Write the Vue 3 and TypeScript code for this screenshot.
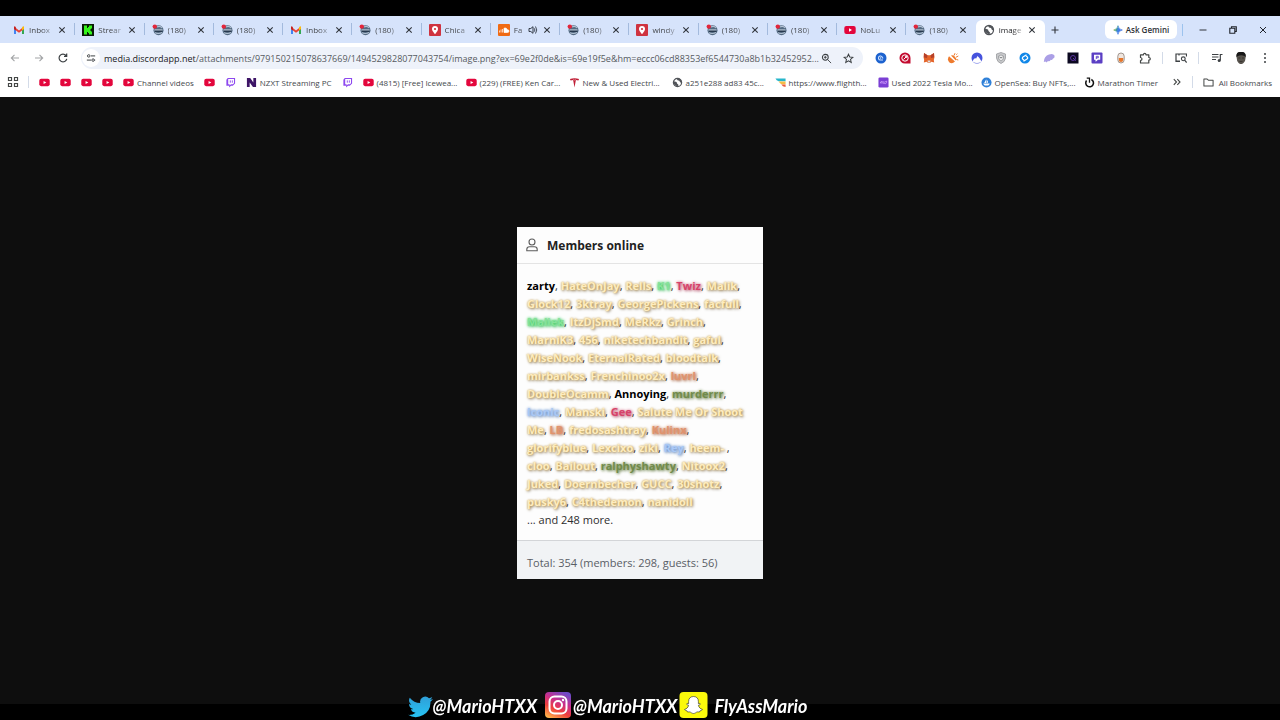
<script setup lang="ts">
interface Tab { icon: string; title: string; audio?: boolean; active?: boolean }
interface Bookmark { icon: string; title?: string; label: string; clip?: boolean }
interface Member { name: string; tone?: string; end?: string }

const tabs: Tab[] = [
  { icon: 'gmail', title: 'Inbox' },
  { icon: 'kick', title: 'Strear' },
  { icon: 'forum', title: '(180)' },
  { icon: 'forum', title: '(180)' },
  { icon: 'gmail', title: 'Inbox' },
  { icon: 'forum', title: '(180)' },
  { icon: 'pin', title: 'Chica' },
  { icon: 'cloud', title: 'Fa', audio: true },
  { icon: 'forum', title: '(180)' },
  { icon: 'pin', title: 'windy' },
  { icon: 'forum', title: '(180)' },
  { icon: 'forum', title: '(180)' },
  { icon: 'youtube', title: 'NoLu' },
  { icon: 'forum', title: '(180)' },
  { icon: 'globe', title: 'image', active: true },
]

const bookmarks: Bookmark[] = [
  { icon: 'youtube', label: 'YouTube' },
  { icon: 'youtube', label: 'YouTube' },
  { icon: 'youtube', label: 'YouTube' },
  { icon: 'youtube', label: 'YouTube' },
  { icon: 'youtube', title: 'Channel videos', label: 'Channel videos' },
  { icon: 'youtube', label: 'YouTube' },
  { icon: 'twitch', label: 'Twitch' },
  { icon: 'nzxt', title: 'NZXT Streaming PC', label: 'NZXT' },
  { icon: 'twitch', label: 'Twitch' },
  { icon: 'youtube', title: '(4815) [Free] Icewea...', label: 'YouTube', clip: true },
  { icon: 'youtube', title: '(229) (FREE) Ken Car...', label: 'YouTube', clip: true },
  { icon: 'tesla', title: 'New & Used Electri...', label: 'Tesla', clip: true },
  { icon: 'globe', title: 'a251e288 ad83 45c...', label: 'Page', clip: true },
  { icon: 'flight', title: 'https://www.flighth...', label: 'Flight', clip: true },
  { icon: 'violet', title: 'Used 2022 Tesla Mo...', label: 'Tesla', clip: true },
  { icon: 'opensea', title: 'OpenSea: Buy NFTs,...', label: 'OpenSea', clip: true },
  { icon: 'timer', title: 'Marathon Timer', label: 'Timer' },
]

const extensions = ['bluedot', 'redswirl', 'fox', 'plug', 'nord', 'shield', 'shazam', 'wing', 'darkbox', 'pbox', 'capsule', 'puzzle']

const m = (name: string, tone = 'gold', end = ','): Member => ({ name, tone, end })
const lines: Member[][] = [
  [m('zarty', 'black'), m('HateOnJay'), m('Rells'), m('K1', 'green'), m('Twiz', 'red'), m('Malik')],
  [m('Glock12'), m('3ktray'), m('GeorgePickens'), m('facfull')],
  [m('Maliek', 'green'), m('ItzDjSmd'), m('MeRkz'), m('Grinch')],
  [m('MarniK3'), m('456'), m('niketechbandit'), m('gaful')],
  [m('WiseNook'), m('EternalRated'), m('bloodtalk')],
  [m('mirbankss'), m('Frenchinoo2x'), m('luvrl', 'orange')],
  [m('DoubleOcamm'), m('Annoying', 'black'), m('murderrr', 'olive')],
  [m('Iconic', 'blue'), m('Manski'), m('Gee', 'red'), m('Salute Me Or Shoot', 'gold', '')],
  [m('Me'), m('LB', 'orange'), m('fredosashtray'), m('Kulinx', 'orange')],
  [m('glorifyblue'), m('Lexcixo'), m('ziki'), m('Rey', 'blue'), m('heem-', 'gold', ' ,')],
  [m('cloo'), m('Bailout'), m('ralphyshawty', 'olive'), m('Nitoox2')],
  [m('Juked'), m('Doernbecher'), m('GUCC'), m('30shotz')],
  [m('pusky6'), m('C4thedemon'), m('nanidoll', 'gold', '')],
]
</script>

<template>
  <svg class="defs" width="0" height="0" aria-hidden="true">
    <defs>
      <linearGradient id="bird" x1="0" y1="0" x2="0" y2="1"><stop offset="0" stop-color="#2f9fd8" /><stop offset="1" stop-color="#27c3f3" /></linearGradient>
      <linearGradient id="insta" x1="0.2" y1="1" x2="0.7" y2="0"><stop offset="0" stop-color="#fdb04a" /><stop offset="0.35" stop-color="#ef3f3c" /><stop offset="0.65" stop-color="#c92f8d" /><stop offset="1" stop-color="#6f4bc8" /></linearGradient>
      <linearGradient id="spark" x1="0" y1="0" x2="1" y2="0.3"><stop offset="0" stop-color="#e9b52c" /><stop offset="0.3" stop-color="#3fa26a" /><stop offset="0.6" stop-color="#3f7fe8" /><stop offset="1" stop-color="#3a6fe0" /></linearGradient>
      <symbol id="i-gmail" viewBox="0 0 12 12"><path d="M1 3v7h2V5z" fill="#4285f4" /><path d="M11 3v7H9V5z" fill="#34a853" /><path d="M1 2.5L6 6.4l5-3.9v2.4L6 8.8 1 4.900z" fill="#ea4335" /><path d="M1 2.500h1.200L3 3.500v2.900L1 5z" fill="#c5221f" /><path d="M11 2.500H9.800L9 3.500v2.900L11 5z" fill="#fbbc04" /></symbol>
      <symbol id="i-kick" viewBox="0 0 12 12"><rect width="12" height="12" fill="#0a1a08" /><path d="M2 1.500h3v2.500h1v-1h1V1.500h3v3H9v1H8v1h1v1h1v3H7V9H6V8H5v2.500H2z" fill="#35f51c" /></symbol>
      <symbol id="i-forum" viewBox="0 0 12 12"><circle cx="6.500" cy="6.300" r="5" fill="#536a82" /><path d="M5 3q3-1.500 5 1M3 8.800q3.500 1.500 7-.300" stroke="#b4c2d4" stroke-width="1.200" fill="none" /><path d="M2.500 6h8" stroke="#dbe3ee" stroke-width="1" /><path d="M3 7.300h7.500" stroke="#25374c" stroke-width="1.300" /><circle cx="2.800" cy="2.600" r="2.200" fill="#e3263c" /></symbol>
      <symbol id="i-pin" viewBox="0 0 12 12"><rect width="12" height="12" rx="1" fill="#cf3340" /><path d="M6 2a3 3 0 0 0-3 3c0 2 3 5.200 3 5.200S9 7 9 5a3 3 0 0 0-3-3z" fill="#fff" /><circle cx="6" cy="5" r="1.100" fill="#cf3340" /></symbol>
      <symbol id="i-cloud" viewBox="0 0 12 12"><rect width="12" height="12" rx="1" fill="#f06a13" /><path d="M6 8.500V4.200q2.500-1 3.300 1.500 1.700 0 1.700 1.400T9.600 8.500zM1.500 6.500v2M3 5.500v3M4.500 5v3.500" fill="#fff" stroke="#fff" stroke-width=".7" /></symbol>
      <symbol id="i-youtube" viewBox="0 0 12 12"><rect x=".3" y="2" width="11.400" height="8" rx="2" fill="#e3063c" /><path d="M5 4.300v3.400L8 6z" fill="#fff" /></symbol>
      <symbol id="i-globe" viewBox="0 0 12 12"><circle cx="6" cy="6" r="4.500" fill="#fff" stroke="#515459" stroke-width="1.300" /><path d="M2 4.500l3 1 .500 1.500L7 8.500l-.5 2-3-1.500L1.500 7zM5 1.500l1 2 2 .5 1 2 1.500 0L10 3 7.500 1.500z" fill="#515459" /></symbol>
      <symbol id="i-twitch" viewBox="0 0 12 12"><path d="M3 1h8v6L8.500 9.500h-2L4.500 11.500v-2H1.500V3z" fill="#8d48ef" /><path d="M3.500 2.200h6.300v4.500L8.500 8H6.500L5 9.300V8H3.500z" fill="#fff" /><path d="M5.800 3.700v2.500M8 3.700v2.500" stroke="#8d48ef" /></symbol>
      <symbol id="i-nzxt" viewBox="0 0 12 12"><path d="M1 1h3.600l3.400 5V1h3v10H7.600L4 6v5H1z" fill="#3d1466" /></symbol>
      <symbol id="i-tesla" viewBox="0 0 12 12"><path d="M1 2.200Q6 .5 11 2.200l-.8 1.600-2.700-.6L6 11.500 4.500 3.200l-2.700.6z" fill="#c01f36" /><path d="M4.900 2.500L6 3.600l1.100-1.100" stroke="#fff" stroke-width=".6" fill="none" /></symbol>
      <symbol id="i-flight" viewBox="0 0 12 12"><path d="M.5 1.500h11v3H4Q1.500 4 .5 1.500z" fill="#27b6cb" /><path d="M4 5h7.500v2.800H7Q5 7 4 5z" fill="#f4bd45" /><path d="M7 8.300h4.500V11Q8 11 7 8.300z" fill="#ec5b3c" /></symbol>
      <symbol id="i-violet" viewBox="0 0 12 12"><rect x=".5" y=".5" width="11" height="11" rx="1.500" fill="#7b3fd4" /><path d="M2.500 6.500Q3 4 5 5.200t4.500-.7Q9.500 8 7 7T2.500 6.500z" stroke="#d9a8ff" stroke-width=".8" fill="none" /></symbol>
      <symbol id="i-opensea" viewBox="0 0 12 12"><circle cx="6" cy="6" r="5.500" fill="#2f80d8" /><path d="M5.700 2.500v4H3.500zM6.300 3q2 1.500 1 3.500h-1zM2.500 7.200h7Q9 9.300 7.500 9.300h-3Q3 9.300 2.500 7.200z" fill="#fff" /></symbol>
      <symbol id="i-timer" viewBox="0 0 12 12"><path d="M8 2.700a4.200 4.200 0 1 1-5.200 1.200" fill="none" stroke="#111" stroke-width="1.700" /><path d="M3 1.300h3v5" stroke="#111" stroke-width="1.400" fill="none" /></symbol>
      <symbol id="i-bluedot" viewBox="0 0 12 12"><circle cx="6" cy="6" r="5.500" fill="#1c62cf" /><path d="M8 8H5.500a2 2 0 1 1 1.800-2.800L8 6.500" fill="none" stroke="#cfe2ff" stroke-width="1.100" /><circle cx="5.600" cy="6" r=".8" fill="#cfe2ff" /></symbol>
      <symbol id="i-redswirl" viewBox="0 0 12 12"><path d="M6 .5A5.500 5.500 0 1 0 6 11.500h5.500V6A5.500 5.500 0 0 0 6 .500z" fill="#c30c30" /><circle cx="6" cy="6" r="3.200" stroke="#fff" fill="none" /><path d="M4.500 7.500L7.500 4.500M6 4.300h1.700V6" stroke="#fff" stroke-width="1" fill="none" /></symbol>
      <symbol id="i-fox" viewBox="0 0 12 12"><path d="M1 1l3.500 2.200h3L11 1l.5 4-.7 3 .4 2.500-3-.7L7 11H5L3.800 9.800l-3 .7L1.200 8 .5 5z" fill="#e4642a" /><path d="M1 1l3.500 2.200L4 6 1 5.500zM11 1L7.500 3.200 8 6l3-.5z" fill="#b5402a" /><path d="M4.500 8.500h3l-.5 2H5z" fill="#ddd" /></symbol>
      <symbol id="i-plug" viewBox="0 0 12 12"><path d="M2 4.200L8 9.500Q5 12.500 2.200 10.200-.2 7.500 2 4.200z" fill="#ee7a2d" /><path d="M4 3.500Q6 2.800 8 4.800T8.800 8.500z" fill="#ee7a2d" /><path d="M7 3.500L8 1.200M9 5.200L11.300 4M9.300 7.500l2 .5M9.300 2.700l1-1" stroke="#ee7a2d" stroke-width="1" /></symbol>
      <symbol id="i-nord" viewBox="0 0 12 12"><circle cx="6" cy="6" r="5.500" fill="#4653dd" /><path d="M1.500 9.500Q2.500 6.500 4.200 6L5 6.700 6.500 4Q9 6 10.500 9.500 6 12.500 1.500 9.500z" fill="#fff" /></symbol>
      <symbol id="i-shield" viewBox="0 0 12 12"><path d="M6 .5l4.500 1.500v4Q10 10 6 11.500 2 10 1.500 6V2z" fill="#c8c9cb" stroke="#999b9e" stroke-width=".8" /><path d="M6 3l2.500 1v2Q8 8 6 9 4 8 3.500 6V4z" fill="#eee" stroke="#8d9094" stroke-width=".7" /><path d="M4.500 5l1.500 1 1.500-1" stroke="#77797c" fill="none" /></symbol>
      <symbol id="i-shazam" viewBox="0 0 12 12"><circle cx="6" cy="6" r="5.500" fill="#1187e8" /><path d="M7.500 2.800L4 4.900q-1.500 1.500.2 2.600l.8.5M4.500 9.200L8 7.100q1.500-1.500-.2-2.600L7 4" fill="none" stroke="#fff" stroke-width="1.200" /></symbol>
      <symbol id="i-wing" viewBox="0 0 12 12"><path d="M.8 10Q1 4 6 2.500q4-1.500 5.500 1 .3 3-1.500 3-.5 2-2.300 1.300Q6.700 10 5 9L3.500 10.500l-1-1z" fill="#ab9fe6" /></symbol>
      <symbol id="i-darkbox" viewBox="0 0 12 12"><rect x=".5" y=".5" width="11" height="11" fill="#0b0820" /><circle cx="6" cy="6" r="2.500" fill="none" stroke="#5a34a0" stroke-width="1" /><path d="M6 6l2.800 2.800" stroke="#5a34a0" /></symbol>
      <symbol id="i-pbox" viewBox="0 0 12 12"><rect x=".5" y=".5" width="11" height="11" rx="1" fill="#5b3fc4" /><path d="M4.500 9.500v-1.800H3V2.700h6.200v5H7L5 9.500z" fill="#fff" /><path d="M5.300 7V4.300h2v1.500h-2" fill="none" stroke="#5b3fc4" stroke-width=".9" /></symbol>
      <symbol id="i-capsule" viewBox="0 0 12 12"><rect x="2.800" y="1" width="6.400" height="10" rx="3.200" fill="#efe6df" stroke="#978b83" stroke-width=".9" /><path d="M3.800 6h4.400v1.800a2.200 2.200 0 0 1-4.400 0z" fill="#e6762b" /></symbol>
      <symbol id="i-puzzle" viewBox="0 0 12 12"><path d="M1.500 2.800h3Q4.500 1.300 5.700 1.300T7 2.800h2.800v2.700q1.500 0 1.500 1.300T9.800 8v3H1.500V8.500Q3 8.300 3 7T1.500 5.500z" fill="none" stroke="#444746" stroke-width="1.200" stroke-linejoin="round" /></symbol>
    </defs>
  </svg>

  <div class="screen">
    <header class="browser">
      <nav class="tabs" aria-label="Tabs">
        <div v-for="(t, i) in tabs" :key="i" class="tab" :class="{ active: t.active, last: i === tabs.length - 2 }">
          <svg class="fav"><use :href="'#i-' + t.icon" /></svg>
          <span class="tab-title" :class="{ short: t.audio }">{{ t.title }}</span>
          <svg v-if="t.audio" class="audio" viewBox="0 0 10 10"><path d="M1 3.500h1.800L5 1.700v6.600L2.800 6.500H1z" fill="none" stroke="#333b47" /><path d="M6.300 3.300q1.200 1.700 0 3.400M7.500 1.500q2.500 3.500 0 7" fill="none" stroke="#333b47" stroke-width=".9" /></svg>
          <button class="close" aria-label="Close tab"><svg viewBox="0 0 8 8"><path d="M1.300 1.300l5.400 5.400M6.700 1.300L1.300 6.700" stroke="#30343b" stroke-width="1.100" /></svg></button>
        </div>
        <div class="strip-end">
          <button class="plus" aria-label="New tab"><svg viewBox="0 0 10 10"><path d="M5 1.500v7M1.500 5h7" stroke="#30343b" stroke-width="1.100" /></svg></button>
          <button class="gemini"><svg viewBox="0 0 12 12"><path d="M6 .8Q6.600 5.400 11.200 6 6.600 6.600 6 11.200 5.400 6.600.8 6 5.400 5.400 6 .8z" fill="url(#spark)" stroke="url(#spark)" stroke-width=".8" /></svg>Ask Gemini</button>
          <i class="sep blue"></i>
          <button class="win" aria-label="Minimize"><svg viewBox="0 0 10 10"><path d="M1.500 5h7" stroke="#30343b" /></svg></button>
          <button class="win" aria-label="Restore"><svg viewBox="0 0 10 10"><path d="M1.800 3.300h5v5h-5zM3.500 3V1.700h4.800v4.800H7" fill="none" stroke="#20242b" stroke-width="1.100" /></svg></button>
          <button class="win" aria-label="Close"><svg viewBox="0 0 10 10"><path d="M2 2l6 6M8 2L2 8" stroke="#20242b" /></svg></button>
        </div>
      </nav>

      <div class="toolbar">
        <button class="tool" aria-label="Back"><svg viewBox="0 0 12 12"><path d="M10 6H2.500M5.500 2.800L2.300 6l3.200 3.200" fill="none" stroke="#a2a4a6" stroke-width="1.100" /></svg></button>
        <button class="tool" aria-label="Forward"><svg viewBox="0 0 12 12"><path d="M2 6h7.500M6.500 2.800L9.700 6 6.500 9.200" fill="none" stroke="#a2a4a6" stroke-width="1.100" /></svg></button>
        <button class="tool" aria-label="Reload"><svg viewBox="0 0 12 12"><path d="M9 3.500A3.900 3.900 0 1 0 9.800 6.800M9.700 1.500v2.800H7" fill="none" stroke="#3c4043" stroke-width="1.200" /></svg></button>
        <div class="omnibox">
          <button class="site" aria-label="Site information"><svg viewBox="0 0 12 12"><path d="M1.500 3.500h2M6 3.500h5M1 8.500h5M9.800 8.500h1.200" stroke="#3c4043" stroke-width="1.200" /><circle cx="3.300" cy="3.500" r="1.500" fill="#fff" stroke="#3c4043" stroke-width="1.100" /><circle cx="8.500" cy="8.500" r="1.500" fill="#fff" stroke="#3c4043" stroke-width="1.100" /></svg></button>
          <a class="url" href="#"><b>media.discordapp.net</b>/attachments/979150215078637669/1494529828077043754/image.png?ex=69e2f0de&amp;is=69e19f5e&amp;hm=eccc06cd88353ef6544730a8b1b32452952...</a>
          <button class="in" aria-label="Zoom"><svg viewBox="0 0 12 12"><circle cx="4.700" cy="4.700" r="3.200" fill="none" stroke="#3c4043" stroke-width="1.100" /><path d="M7 7l4 4M4.700 3.200v3M3.200 4.700h3" stroke="#3c4043" /></svg></button>
          <button class="in" aria-label="Bookmark this tab"><svg viewBox="0 0 12 12"><path d="M6 1.300l1.400 3.100 3.400.3-2.600 2.200.8 3.400-3-1.800-3 1.800.8-3.400L1.200 4.700l3.400-.3z" fill="none" stroke="#3c4043" stroke-width="1.100" /></svg></button>
        </div>
        <button v-for="e in extensions" :key="e" class="tool" :aria-label="e"><svg><use :href="'#i-' + e" /></svg></button>
        <i class="sep mid"></i>
        <button class="tool" aria-label="Search tabs"><svg viewBox="0 0 12 12"><path d="M5 9.500H1V2h10.500v2.500M4 2v1.500" fill="none" stroke="#3c4043" stroke-width="1.200" /><path d="M1 8.500h4V10H1z" fill="#3c4043" /><circle cx="8.300" cy="6.800" r="1.900" fill="none" stroke="#3c4043" stroke-width="1.100" /><path d="M9.600 8.200l2 2.300" stroke="#3c4043" stroke-width="1.200" /></svg></button>
        <i class="sep mid"></i>
        <button class="tool" aria-label="Media"><svg viewBox="0 0 12 12"><path d="M1 2.500h6.500M1 5h6.500M1 7.500h4M9.300 8.500v-6h2.200" stroke="#3c4043" stroke-width="1.200" fill="none" /><circle cx="8.200" cy="8.500" r="1.500" fill="#3c4043" /></svg></button>
        <button class="tool" aria-label="Profile"><svg viewBox="0 0 12 12"><path d="M1.500 5Q1-.2 6-.2T10.700 5L10 9Q8 12.200 6 12.200T2.200 9z" fill="#57534d" /><path d="M1.500 5Q.8-.2 6-.2T10.700 5L9.500 4Q6 2.500 3 4z" fill="#181818" /><path d="M3.300 6h2M7 6h2M4.500 9.500h3" stroke="#3a3631" /></svg></button>
        <button class="tool" aria-label="Menu"><svg viewBox="0 0 12 12"><g fill="#3c4043"><circle cx="6" cy="2" r="1" /><circle cx="6" cy="6" r="1" /><circle cx="6" cy="10" r="1" /></g></svg></button>
      </div>

      <nav class="bookmarks" aria-label="Bookmarks">
        <button class="apps" aria-label="Apps"><svg viewBox="0 0 12 12"><path d="M1.500 1.500h3v3h-3zM7.500 1.500h3v3h-3zM1.500 7.500h3v3h-3zM7.500 7.500h3v3h-3z" fill="none" stroke="#444746" stroke-width="1.200" /></svg></button>
        <i class="sep"></i>
        <div class="marks">
          <a v-for="(b, i) in bookmarks" :key="i" href="#" class="mark" :aria-label="b.label">
            <svg><use :href="'#i-' + b.icon" /></svg><span v-if="b.title" :class="{ clip: b.clip }">{{ b.title }}</span>
          </a>
        </div>
        <button class="more" aria-label="More bookmarks"><svg viewBox="0 0 10 10"><path d="M1.800 2.200L4.500 5 1.800 7.800M5.300 2.200L8 5 5.300 7.800" fill="none" stroke="#444746" stroke-width="1.100" /></svg></button>
        <i class="sep"></i>
        <a class="mark all" href="#"><svg viewBox="0 0 12 12"><path d="M1 2.200h3.500l1.300 1.300H11v6.300H1z" fill="none" stroke="#444746" stroke-width="1.100" stroke-linejoin="round" /></svg><span>All Bookmarks</span></a>
      </nav>
    </header>

    <main class="page">
      <section class="card">
        <h2><svg viewBox="0 0 12 14"><circle cx="6" cy="4" r="3" fill="none" stroke="#5c5c5c" stroke-width="1.100" /><path d="M.8 12.800V11.500Q.8 8.800 3.500 8.800h5q2.700 0 2.700 2.700v1.300z" fill="none" stroke="#5c5c5c" stroke-width="1.100" /></svg>Members online</h2>
        <div class="members">
          <p v-for="(line, i) in lines" :key="i"><template v-for="(p, j) in line" :key="j"><a href="#" :class="p.tone">{{ p.name }}</a>{{ p.end + ' ' }}</template></p>
          <p class="rest">... and 248 more.</p>
        </div>
        <footer>Total: 354 (members: 298, guests: 56)</footer>
      </section>
    </main>

    <div class="socials">
      <svg class="bird" viewBox="0 0 24 20"><path d="M24 2.400a10 10 0 0 1-2.800.8A5 5 0 0 0 23.300.5a10 10 0 0 1-3.100 1.200 4.900 4.900 0 0 0-8.400 4.500A14 14 0 0 1 1.700 1a4.900 4.900 0 0 0 1.500 6.600A5 5 0 0 1 1 7a4.900 4.900 0 0 0 3.900 4.900 5 5 0 0 1-2.200.1 4.900 4.900 0 0 0 4.600 3.400A9.900 9.900 0 0 1 0 17.500 14 14 0 0 0 21.500 5 10 10 0 0 0 24 2.400z" fill="url(#bird)" /></svg>
      <span class="handle">@MarioHTXX</span>
      <svg class="insta" viewBox="0 0 26 26"><rect width="26" height="26" rx="4" fill="url(#insta)" /><rect x="4.500" y="4.500" width="17" height="17" rx="5" fill="none" stroke="#fff" stroke-width="2" /><circle cx="13" cy="13" r="4" fill="none" stroke="#fff" stroke-width="2" /><circle cx="18" cy="8" r="1.200" fill="#fff" /></svg>
      <span class="handle">@MarioHTXX</span>
      <svg class="snap" viewBox="0 0 28 26"><rect width="28" height="26" rx="4" fill="#fbf90b" /><path d="M14 4.500c3.300 0 5 2.200 4.900 5v2.200l1.500-.3c.9.300.7 1.200-1.500 2 .5 2 2 3.500 4 4-.1 1-1.500 1.100-2.400 1.400l-.5 1.200-2.300-.1c-1.200.3-2 1.600-3.700 1.600s-2.500-1.300-3.700-1.600l-2.300.1-.5-1.200c-.9-.3-2.300-.4-2.400-1.400 2-.5 3.500-2 4-4-2.200-.8-2.400-1.700-1.500-2l1.500.3V9.500c-.1-2.800 1.600-5 4.900-5z" fill="#fff" stroke="#222" stroke-width=".6" /></svg>
      <span class="handle">FlyAssMario</span>
    </div>
  </div>
</template>

<style>
html, body { margin: 0; background: #000; }
</style>

<style scoped>
* { box-sizing: border-box; }
.defs { position: absolute; }
.screen { min-height: 100vh; display: flex; flex-direction: column; padding: 16px 0; background: #000; font-family: "Open Sans", "Noto Sans", sans-serif; color: #44474b; overflow: hidden; }
button { border: 0; padding: 0; background: none; font: inherit; color: inherit; display: flex; align-items: center; justify-content: center; }
a { color: inherit; text-decoration: none; }
svg { display: block; flex: none; }
.browser { background: #fff; }
.tabs { display: flex; height: 27px; padding-left: 6px; background: #d6e3fb; }
.tab { flex: 1 1 0; min-width: 0; display: flex; align-items: center; padding: 0 8px 0 7px; position: relative; font-size: 8px; }
.tab::after { content: ""; position: absolute; right: 0; top: 7px; width: 1px; height: 12px; background: #a3badd; }
.tab.last::after, .tab.active::after { display: none; }
.fav { width: 12px; height: 12px; }
.tab-title { flex: 1; min-width: 0; margin-left: 4px; white-space: nowrap; mask-image: linear-gradient(90deg, #000 50%, transparent 110%); }
.tab-title.short { flex: none; width: 11px; }
.audio { width: 10px; height: 10px; margin: 0 auto; }
.close { width: 10px; height: 10px; margin-left: 3px; }
.audio + .close { margin-left: 0; }
.close svg { width: 8px; height: 8px; }
.tab.active { background: #fff; margin-top: 4px; padding-bottom: 4px; border-radius: 6px 6px 0 0; color: #202124; }
.strip-end { width: 235px; display: flex; align-items: center; }
.plus { width: 20px; height: 20px; }
.plus svg { width: 10px; height: 10px; }
.gemini { width: 72px; height: 19px; margin-left: 40px; border-radius: 6px; background: #fff; gap: 3px; font-size: 8px; font-weight: 600; color: #2f3338; }
.gemini svg { width: 10px; height: 10px; }
.sep { width: 1px; height: 12px; background: #d3dbe8; flex: none; }
.sep.blue { background: #9cc3ee; margin: 0 5px; }
.win { width: 30px; height: 20px; }
.win svg { width: 10px; height: 10px; }
.toolbar { display: flex; align-items: center; height: 30px; padding: 0 3px; }
.tool { width: 24px; height: 24px; flex: none; }
.tool svg { width: 12px; height: 12px; }
.sep.mid { margin: 0 6px 0 5px; }
.omnibox { flex: 1; min-width: 0; display: flex; align-items: center; height: 22px; margin: 0 6px; padding: 0 4px 0 1px; border-radius: 11px; background: #eef2fa; }
.site { width: 18px; height: 18px; border-radius: 9px; background: #fff; }
.site svg { width: 10px; height: 10px; }
.url { flex: 1; min-width: 0; margin-left: 4px; font-size: 9px; white-space: nowrap; color: #565a60; }
.url b { font-weight: 400; color: #202124; }
.in { width: 22px; height: 20px; }
.in svg { width: 11px; height: 11px; }
.bookmarks { display: flex; align-items: center; height: 24px; padding: 0 8px 6px 7px; font-size: 8px; }
.apps { width: 12px; height: 12px; margin-right: 9px; }
.apps svg { width: 12px; height: 12px; }
.marks { flex: 1; min-width: 0; display: flex; gap: 10px; margin-left: 10px; }
.mark { display: flex; align-items: center; gap: 3px; white-space: nowrap; flex: none; }
.mark svg { width: 11px; height: 11px; }
.clip { width: 79px; }
.more { width: 10px; height: 10px; margin-right: 10px; }
.more svg { width: 10px; height: 10px; }
.all { margin-left: 10px; gap: 5px; }
.page { flex: 1; display: flex; align-items: center; justify-content: center; background: #0e0e0e; }
.card { width: 246px; margin-top: 5px; background: #fdfdfd; color: #2b2b2b; font-size: 11px; }
h2 { display: flex; align-items: center; gap: 9px; height: 37px; margin: 0; padding: 0 9px; border-bottom: 1px solid #e4e4e4; font-size: 12px; font-weight: 700; color: #222; }
h2 svg { width: 12px; height: 14px; }
.members { padding: 13px 10px 11px; line-height: 18px; white-space: nowrap; }
p { margin: 0; }
.members a { font-weight: 700; }
.rest { color: #2e2e2e; }
.members .black { color: #000; }
.gold { color: #fdecc0; text-shadow: 0 0 2px #e0b04c, 1px 1px 3px #6f6048; }
.green { color: #86e29a; text-shadow: 0 0 3px #2ed158, 1px 1px 3px #4cb568; }
.red { color: #d6436a; text-shadow: 0 0 3px #e889a0, 1px 1px 3px #a5596d; }
.orange { color: #e0936e; text-shadow: 0 0 3px #df8a61, 1px 1px 3px #96674f; }
.olive { color: #718b4b; text-shadow: 0 0 3px #8fa56c, 1px 1px 3px #657849; }
.blue { color: #a9c8f5; text-shadow: 0 0 3px #6b9be0, 1px 1px 3px #6880a5; }
footer { height: 39px; padding: 4px 10px 0; display: flex; align-items: center; border-top: 1px solid #d3d5d8; background: #f1f3f5; color: #5a5e66; }
.socials { position: fixed; left: 0; right: 0; bottom: 0; height: 28px; display: flex; align-items: center; justify-content: center; padding-right: 65px; font-family: Lato, sans-serif; font-style: italic; font-weight: 700; font-size: 18px; line-height: 26px; color: #fff; }
.bird { width: 25px; height: 22px; margin-top: 2px; }
.insta { width: 26px; height: 26px; margin: 0 2px 2px 8px; }
.snap { width: 29px; height: 26px; margin: 0 6px 2px 2px; }
</style>
